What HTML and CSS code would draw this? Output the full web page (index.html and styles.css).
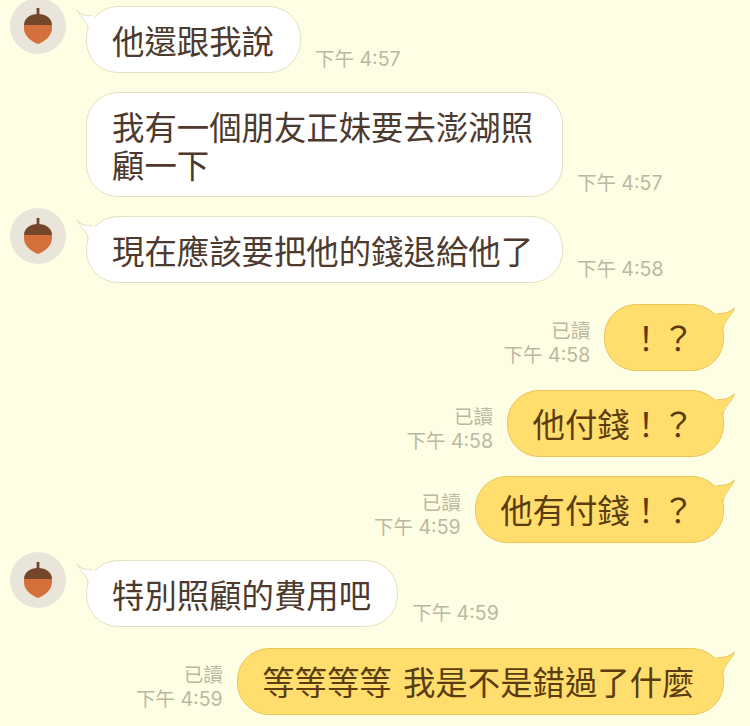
FILE: index.html
```html
<!DOCTYPE html>
<html lang="zh-Hant">
<head>
  <meta charset="UTF-8">
  <title>聊天</title>
  <link rel="stylesheet" href="styles.css">
</head>
<body>
  <svg class="defs" width="0" height="0">
    <symbol id="acorn" viewBox="0 0 56 56">
      <path d="M26.600 10h2.800v7h-2.800z" fill="#74462a"/>
      <path d="M14 27c0-6.500 6-11 14-11s14 4.500 14 11z" fill="#74462a"/>
      <path d="M14 27h28c0 3 .2 5-1 8-2 5-8 9-13 11-5-2-11-6-13-11-1.200-3-1-5-1-8z" fill="#d3703c"/>
    </symbol>
    <symbol id="tail-in" viewBox="0 0 24 24">
      <path d="M1 1c3 5 9 6 17 5l4 14H13C12 13 5 9 1 1z" fill="#fff"/>
      <path d="M1 1c3 5 9 6 15 5.500M12 19C11 12 5 9 1 1" fill="none" stroke="#e4e1bf" stroke-width="1"/>
    </symbol>
    <symbol id="tail-out" viewBox="0 0 24 28">
      <path d="M22.500 1C18 5 11 7 3 6L1 20h10c1-7 8-11 11.500-19z" fill="#ffde6d"/>
      <path d="M22.500 1C18 5 12 7 6 6.500M11 22c1-8 8-12 11.500-21" fill="none" stroke="#eac65a" stroke-width="1"/>
    </symbol>
  </svg>

  <div class="chat">
    <div class="row">
      <div class="avatar"><svg><use href="#acorn"/></svg></div>
      <div class="bubble in"><svg class="tail"><use href="#tail-in"/></svg>他還跟我說</div>
      <div class="meta">下午 4:57</div>
    </div>

    <div class="row no-avatar">
      <div class="bubble in long">我有一個朋友正妹要去澎湖照<br>顧一下</div>
      <div class="meta">下午 4:57</div>
    </div>

    <div class="row">
      <div class="avatar"><svg><use href="#acorn"/></svg></div>
      <div class="bubble in long"><svg class="tail"><use href="#tail-in"/></svg>現在應該要把他的錢退給他了</div>
      <div class="meta">下午 4:58</div>
    </div>

    <div class="row mine wide-gap">
      <div class="meta"><span>已讀</span><span>下午 4:58</span></div>
      <div class="bubble out"><svg class="tail"><use href="#tail-out"/></svg>！？</div>
    </div>

    <div class="row mine">
      <div class="meta"><span>已讀</span><span>下午 4:58</span></div>
      <div class="bubble out"><svg class="tail"><use href="#tail-out"/></svg>他付錢！？</div>
    </div>

    <div class="row mine">
      <div class="meta"><span>已讀</span><span>下午 4:59</span></div>
      <div class="bubble out"><svg class="tail"><use href="#tail-out"/></svg>他有付錢！？</div>
    </div>

    <div class="row narrow-gap">
      <div class="avatar"><svg><use href="#acorn"/></svg></div>
      <div class="bubble in"><svg class="tail"><use href="#tail-in"/></svg>特別照顧的費用吧</div>
      <div class="meta">下午 4:59</div>
    </div>

    <div class="row mine wide-gap">
      <div class="meta"><span>已讀</span><span>下午 4:59</span></div>
      <div class="bubble out"><svg class="tail"><use href="#tail-out"/></svg>等等等等 我是不是錯過了什麼</div>
    </div>
  </div>
</body>
</html>
```

FILE: styles.css
```css
* {
  box-sizing: border-box;
}
html, body {
  margin: 0;
  padding: 0;
}
body {
  background: #fefee4;
  font-family: "Noto Sans CJK TC", "Noto Sans", sans-serif;
  height: 726px;
  overflow: hidden;
}
.defs {
  display: block;
}
.chat {
  display: flex;
  flex-direction: column;
  gap: 19px;
  padding-top: 6px;
}
.row {
  display: flex;
  align-items: flex-end;
  gap: 14px;
  padding-left: 10px;
}
.row.no-avatar {
  padding-left: 86px;
}
.row.wide-gap {
  margin-top: 2px;
}
.row.narrow-gap {
  margin-top: -2px;
}
.row.mine {
  justify-content: flex-end;
  padding-left: 0;
  padding-right: 26px;
}
.avatar {
  width: 56px;
  height: 56px;
  flex: none;
  align-self: flex-start;
  margin: -8px 6px 0 0;
  border-radius: 50%;
  background: #e9e5da;
}
.avatar svg {
  display: block;
  width: 56px;
  height: 56px;
}
.bubble {
  position: relative;
  padding: 13.5px 26px 13.5px 25px;
  border-radius: 32px;
  border: 1px solid;
  font-size: 32.4px;
  line-height: 38px;
  white-space: nowrap;
}
.bubble.in {
  background: #fff;
  border-color: #e4e1bf;
  color: #4d3a2e;
}
.bubble.in.long {
  padding-right: 28.8px;
}
.bubble.out {
  padding: 12.5px 28.5px 14.5px 24.5px;
  word-spacing: 4px;
  background: #ffde6d;
  border-color: #eac65a;
  color: #5a3c10;
}
.tail {
  position: absolute;
  width: 24px;
  height: 24px;
}
.in .tail {
  left: -11px;
  top: 2px;
}
.out .tail {
  right: -13px;
  top: 2px;
  height: 28px;
}
.meta {
  display: flex;
  flex-direction: column;
  align-items: flex-end;
  font-family: Inter, "Noto Sans CJK TC", sans-serif;
  font-size: 19.5px;
  line-height: 24px;
  color: #bcb7a3;
  padding-bottom: 2px;
}
.mine .meta {
  padding-bottom: 4px;
}
```
